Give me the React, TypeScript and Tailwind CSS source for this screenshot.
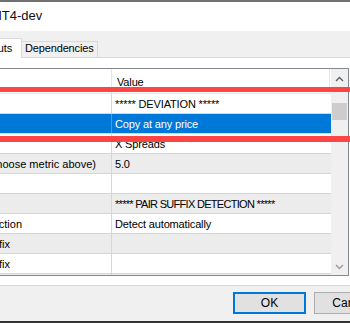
import React from "react";

type Row = {
  label?: string;
  labelW?: string;
  value?: string;
  tone: "white" | "gray" | "sel";
  valueCls?: string;
};

const rows: Row[] = [
  { value: "***** DEVIATION *****", tone: "white" },
  { value: "Copy at any price", tone: "sel" },
  { value: "X Spreads", tone: "white" },
  { label: "Deviation (choose metric above)", labelW: "w-[96px]", value: "5.0", tone: "gray" },
  { tone: "white" },
  { value: "***** PAIR SUFFIX DETECTION *****", tone: "gray", valueCls: "tracking-[-0.7px]" },
  { label: "Pair suffix detection", labelW: "w-[22px]", value: "Detect automatically", tone: "white" },
  { label: "Manual pair prefix", labelW: "w-[10px]", tone: "gray" },
  { label: "Manual pair suffix", labelW: "w-[10px]", tone: "white" },
  { tone: "gray" },
];

function Chevron({ up, color }: { up: boolean; color: string }) {
  return (
    <svg width="9" height="6" viewBox="0 0 9 6">
      <path
        d={up ? "M1 5 L4.5 1.5 L8 5" : "M1 1 L4.5 4.5 L8 1"}
        fill="none"
        stroke={color}
        strokeWidth="1.4"
      />
    </svg>
  );
}

export default function App() {
  return (
    <div className="relative w-[350px] h-[323px] overflow-hidden bg-[#f0f0f0] font-['Liberation_Sans',Arial,sans-serif] text-[11px] text-black tracking-[-0.15px]">
      <div className="h-[2px] bg-[#707070]" />
      <div className="h-[29px] bg-white flex items-center pb-[2px] overflow-hidden whitespace-nowrap">
        <span className="ml-[-9px] text-[13px] leading-none text-[#111] tracking-normal">MT4-dev</span>
      </div>
      <div className="h-[27px] flex items-end border-b border-[#d9d9d9]">
        <div className="w-[22px] h-[20px] mb-[-1px] shrink-0 bg-white border-t border-r border-[#d9d9d9] flex justify-end pr-[9px] pt-[3px] leading-[12px] whitespace-nowrap overflow-hidden">
          <span>Inputs</span>
        </div>
        <div className="w-[76px] h-[16px] shrink-0 border-t border-r border-[#d9d9d9] pl-[3px] leading-[12px] whitespace-nowrap">
          Dependencies
        </div>
      </div>

      <div className="h-[228px] bg-white border-b border-[#d9d9d9] pt-[10px]">
        <div className="w-[349px] h-[208px] border-t border-r border-b border-[#828790] flex overflow-hidden">
          <div className="w-[331px] shrink-0 flex flex-col overflow-hidden">
            <div className="h-[25px] shrink-0 flex border-b border-[#e5e5e5] bg-white">
              <div className="w-[111px] shrink-0" />
              <div className="w-[219px] shrink-0 border-l border-r border-[#e5e5e5] pl-[5px] pt-[2px] flex items-center leading-[12px]">
                Value
              </div>
            </div>
            {rows.map((r, i) => {
              const bg =
                r.tone === "sel" ? "bg-[#0078d7] text-white" : r.tone === "gray" ? "bg-[#ececec]" : "bg-white";
              const line = r.tone === "sel" ? "border-[#4a98dd]" : "border-[#d6d6d6]";
              return (
                <div key={i} className={`h-[20px] shrink-0 flex border-b border-[#d6d6d6] ${bg}`}>
                  <div className="w-[111px] shrink-0 flex items-center overflow-hidden whitespace-nowrap leading-[12px] tracking-normal">
                    {r.label ? (
                      <div className={`${r.labelW} shrink-0 flex justify-end`}>
                        <span className="shrink-0">{r.label}</span>
                      </div>
                    ) : null}
                  </div>
                  <div
                    className={`flex-1 border-l ${line} pl-[3px] flex items-center whitespace-nowrap overflow-hidden leading-[12px] ${r.valueCls ?? ""}`}
                  >
                    {r.value ?? ""}
                  </div>
                </div>
              );
            })}
          </div>
          <div className="w-[17px] shrink-0 bg-[#f0f0f0] flex flex-col">
            <div className="h-[17px] shrink-0 flex items-center justify-center pt-[3px]">
              <Chevron up color="#5f5f5f" />
            </div>
            <div className="mt-[17px] h-[17px] mx-[1px] bg-[#cdcdcd]" />
            <div className="flex-1" />
            <div className="h-[17px] shrink-0 flex items-center justify-center">
              <Chevron up={false} color="#9a9a9a" />
            </div>
          </div>
        </div>
      </div>

      <div className="h-[35px] flex pt-[6px] pl-[233px] gap-[8px] text-[12px] tracking-normal">
        <div className="w-[73px] h-[22px] shrink-0 border-2 border-[#0078d7] bg-[#e1e1e1] flex items-center justify-center leading-none">
          OK
        </div>
        <div className="w-[74px] h-[22px] shrink-0 border border-[#adadad] bg-[#e1e1e1] flex items-center justify-center leading-none">
          Cancel
        </div>
      </div>
      <div className="h-[2px] bg-[#343434]" />

      <div className="absolute left-0 top-[87px] w-[350px] h-[5px] bg-[#fe4545]" />
      <div className="absolute left-0 top-[136px] w-[350px] h-[6px] bg-[#fe4545]" />
    </div>
  );
}
